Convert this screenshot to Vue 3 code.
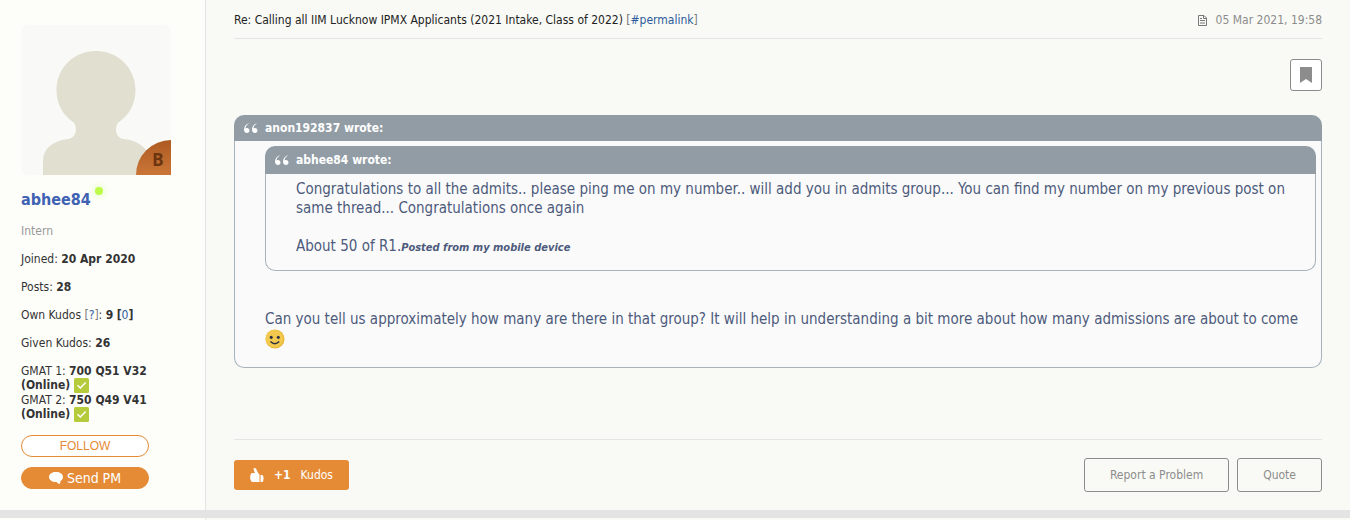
<script setup>
const facts = [
  { label: 'Joined:', value: '20 Apr 2020' },
  { label: 'Posts:', value: '28' },
  { label: 'Own Kudos', help: true, value: '9', given: '0' },
  { label: 'Given Kudos:', value: '26' },
]
const scores = [
  { label: 'GMAT 1:', value: '700 Q51 V32' },
  { label: 'GMAT 2:', value: '750 Q49 V41' },
]
</script>

<template>
  <div class="page">
    <article class="post">
      <aside class="profile">
        <div class="avatar">
          <svg class="person" viewBox="0 0 150 150" aria-hidden="true">
            <path fill="#e1dfd0" d="M75 26C97 26 114.500 43 114.500 65C114.500 80 107 91 98 97C93 101 94 113 103 114C119 116 128 124 128 136V150H22V136C22 124 31 116 47 114C56 113 57 101 52 97C43 91 35.500 80 35.500 65C35.500 43 53 26 75 26Z" />
          </svg>
          <span class="rank">B</span>
        </div>
        <div class="name"><a href="#profile">abhee84</a><span class="online"></span></div>
        <div class="role">Intern</div>
        <div v-for="f in facts" :key="f.label" class="fact">
          {{ f.label }}
          <template v-if="f.help"><span class="bracket">[</span><a href="#kudos">?</a><span class="bracket">]</span>: </template>
          <b>{{ f.value }}</b>
          <template v-if="f.given">{{ ' ' }}<b>[</b><a href="#given">{{ f.given }}</a><b>]</b></template>
        </div>
        <div class="scores">
          <div v-for="s in scores" :key="s.label" class="score">
            {{ s.label }} <b>{{ s.value }}<br />(Online)</b>{{ ' ' }}
            <svg class="check" viewBox="0 0 15 15" aria-hidden="true">
              <rect width="15" height="15" rx="1.500" fill="#b5cb3c" />
              <path d="M3.500 7.300L6.300 10L11.700 4.500" fill="none" stroke="#fff" stroke-width="1.500" />
            </svg>
          </div>
        </div>
        <button class="follow" type="button">FOLLOW</button>
        <button class="message" type="button">
          <svg width="14" height="12" viewBox="0 0 14 12" aria-hidden="true">
            <path fill="#fff" d="M7 0C11 0 14 2 14 5C14 6.800 13 8 11.500 9C11.500 10.200 11.200 11.200 10.700 12C9.400 11.600 8.300 11 7.600 10C3 10.200 0 8 0 5C0 2 3 0 7 0Z" />
          </svg>
          Send PM
        </button>
      </aside>

      <main class="content">
        <header class="head">
          <div>Re: Calling all IIM Lucknow IPMX Applicants (2021 Intake, Class of 2022) <span class="bracket">[</span><a href="#permalink">#permalink</a><span class="bracket">]</span></div>
          <div class="date">
            <svg width="9" height="11" viewBox="0 0 9 11" fill="none" stroke="#777" aria-hidden="true">
              <path d="M.5 .5H6L8.500 3V10.500H.5ZM5.500 .5V3.500H8.500M2 5.500H7M2 8H7M2 3.500H4" />
            </svg>
            <time>05 Mar 2021, 19:58</time>
          </div>
        </header>

        <div class="tools">
          <button class="bookmark" type="button" aria-label="Bookmark">
            <svg width="12" height="16" viewBox="0 0 12 16" aria-hidden="true"><path fill="#8c8c8c" d="M0 0H12V16L6 12L0 16Z" /></svg>
          </button>
        </div>

        <section class="quote">
          <div class="author">
            <svg class="marks" viewBox="0 0 14 10" aria-hidden="true">
              <path fill="#fff" d="M5.500 0C3 1.500 1.600 3.400 1.500 5.600C3.300 4.400 5.500 5.600 5.500 7.500C5.500 9 4.500 10 3 10C1.200 10 0 8.700 0 6.500C0 3.600 2 1 5.500 0ZM13.500 0C11 1.500 9.600 3.400 9.500 5.600C11.300 4.400 13.500 5.600 13.500 7.500C13.500 9 12.500 10 11 10C9.200 10 8 8.700 8 6.500C8 3.600 10 1 13.500 0Z" />
            </svg>
            anon192837 wrote:
          </div>
          <div class="body">
            <section class="quote inner">
              <div class="author">
                <svg class="marks" viewBox="0 0 14 10" aria-hidden="true">
                  <path fill="#fff" d="M5.500 0C3 1.500 1.600 3.400 1.500 5.600C3.300 4.400 5.500 5.600 5.500 7.500C5.500 9 4.500 10 3 10C1.200 10 0 8.700 0 6.500C0 3.600 2 1 5.500 0ZM13.500 0C11 1.500 9.600 3.400 9.500 5.600C11.300 4.400 13.500 5.600 13.500 7.500C13.500 9 12.500 10 11 10C9.200 10 8 8.700 8 6.500C8 3.600 10 1 13.500 0Z" />
                </svg>
                abhee84 wrote:
              </div>
              <div class="body">
                <p>Congratulations to all the admits.. please ping me on my number.. will add you in admits group... You can find my number on my previous post on same thread... Congratulations once again</p>
                <p>About 50 of R1.<em>Posted from my mobile device</em></p>
              </div>
            </section>
            <p>
              Can you tell us approximately how many are there in that group? It will help in understanding a bit more about how many admissions are about to come
              <svg class="smile" viewBox="0 0 20 20" role="img" aria-label="smile">
                <circle cx="10" cy="10" r="9.500" fill="#e6b62f" />
                <circle cx="9.400" cy="9.700" r="8.900" fill="#f2c84f" />
                <ellipse cx="6.200" cy="8.300" rx="1.500" ry="1.600" fill="#2c3140" />
                <ellipse cx="13.300" cy="8.300" rx="1.500" ry="1.600" fill="#2c3140" />
                <path d="M5.500 12.500Q9.800 17 14.200 12.500" fill="none" stroke="#2c3140" stroke-width="1.500" />
              </svg>
            </p>
          </div>
        </section>

        <footer class="actions">
          <button class="kudos" type="button">
            <svg width="14" height="15" viewBox="0 0 14 15" aria-hidden="true">
              <path fill="#fff" d="M4.500 0C6 0 6.500 1 6.800 2.500L8.500 5.500C9.300 6 9.500 6.500 9.500 7V14H3C1.500 14 .8 13 .8 12C0 11.500 0 10.300 .4 9.700C-.1 9 0 7.800 .7 7.300C.4 6 1.200 5 2.500 5H5C4.500 3.500 3.500 2 3.500 1C3.500 .4 4 0 4.500 0ZM10.500 7H12C13 7 13.500 8 13.500 10.500C13.500 13 13 14 12 14H10.500Z" />
            </svg>
            <b>+1</b>
            <span>Kudos</span>
          </button>
          <div class="right">
            <button class="outline" type="button">Report a Problem</button>
            <button class="outline" type="button">Quote</button>
          </div>
        </footer>
      </main>
    </article>
    <div class="next"></div>
  </div>
</template>

<style>
body {
  margin: 0;
  background: #fff;
}
</style>

<style scoped>
* {
  box-sizing: border-box;
}
.page {
  margin-right: 7px;
  background: #f9faf5;
  color: #333;
  font: 12px/14px Tahoma, "DejaVu Sans Condensed", "DejaVu Sans", sans-serif;
}
a {
  color: #2a5a9b;
  text-decoration: none;
}
button {
  margin: 0;
  padding: 0;
  font: inherit;
}
svg {
  flex: none;
}
.post {
  display: flex;
  border-bottom: 8px solid #e4e4e4;
}
.profile {
  flex: none;
  width: 206px;
  padding: 25px 20px 21px 21px;
  background: #fdfefa;
  border-right: 1px solid #e4e4e4;
}
.avatar {
  position: relative;
  width: 150px;
  height: 150px;
  background: #f9faf8;
  border-radius: 8px 8px 0 8px;
}
.person {
  display: block;
}
.rank {
  position: absolute;
  right: 0;
  bottom: 0;
  width: 35px;
  height: 35px;
  padding-left: 9px;
  border-radius: 35px 0 0 0;
  background: linear-gradient(#ad5a22, #cb7638);
  color: #6b3510;
  font: bold 17px/40px "Noto Sans", sans-serif;
  text-align: center;
}
.name {
  display: flex;
  gap: 4px;
  margin-top: 14px;
  font-size: 16px;
  font-weight: bold;
  line-height: 22px;
}
.name a {
  color: #3f62b3;
}
.online {
  width: 8px;
  height: 8px;
  margin-top: -2px;
  border-radius: 50%;
  background: #bdfb4b;
  box-shadow: 0 0 8px #d6fb98;
}
.role {
  margin-top: 13px;
  color: #999;
}
.fact {
  margin-top: 14px;
}
.bracket {
  color: #777;
}
.scores {
  margin-top: 14px;
}
.score {
  height: 29px;
}
.check {
  width: 15px;
  height: 15px;
  vertical-align: -4px;
}
.follow,
.message {
  display: flex;
  align-items: center;
  justify-content: center;
  gap: 4px;
  width: 128px;
  height: 22px;
  border: 1px solid #e58b36;
  border-radius: 11px;
}
.follow {
  margin-top: 13px;
  background: #fff;
  color: #e58b36;
  font: 12px/20px "Liberation Sans", Arial, sans-serif;
}
.message {
  margin-top: 10px;
  background: #e58b36;
  color: #fff;
  font-size: 14px;
}
.content {
  flex: 1;
  min-width: 0;
  padding: 0 28px;
}
.head {
  display: flex;
  justify-content: space-between;
  padding: 13px 0 11px;
  border-bottom: 1px solid #e4e4e4;
  color: #222;
}
.date {
  display: flex;
  align-items: center;
  gap: 9px;
  color: #8c8c8c;
}
.tools {
  display: flex;
  justify-content: flex-end;
  padding: 20px 0 24px;
}
.bookmark {
  display: grid;
  place-items: center;
  width: 32px;
  height: 32px;
  border: 1px solid #8c8c8c;
  border-radius: 3px;
  background: #fff;
}
.author {
  display: flex;
  align-items: center;
  gap: 7px;
  padding: 0 10px;
  border-radius: 10px 10px 0 0;
  background: #929ca5;
  color: #fff;
  font-size: 12px;
  font-weight: bold;
  line-height: 26px;
}
.marks {
  width: 14px;
  height: 10px;
}
.body {
  padding: 5px 5px 18px 30px;
  border: 1px solid #a6b3bd;
  border-top: 0;
  border-radius: 0 0 10px 10px;
  background: #fafafa;
  color: #4d5a7c;
  font: 15px/19px "Lucida Grande", "DejaVu Sans Condensed", "DejaVu Sans", sans-serif;
}
.inner .author {
  line-height: 28px;
}
.inner .body {
  padding-top: 6px;
  padding-bottom: 13px;
}
.inner + p {
  margin-top: 39px;
}
p {
  margin: 0;
}
p + p {
  margin-top: 19px;
}
em {
  font-size: 11px;
  font-weight: bold;
}
.smile {
  width: 20px;
  height: 20px;
  vertical-align: -5px;
}
.actions {
  display: flex;
  align-items: center;
  justify-content: space-between;
  margin-top: 71px;
  padding: 18px 0;
  border-top: 1px solid #e4e4e4;
}
.kudos {
  display: flex;
  align-items: center;
  gap: 10px;
  height: 30px;
  padding: 0 16px;
  border: 0;
  border-radius: 3px;
  background: #e58b36;
  color: #fff;
}
.right {
  display: flex;
  gap: 8px;
}
.outline {
  height: 34px;
  padding: 0 25px;
  border: 1px solid #8c8c8c;
  border-radius: 3px;
  background: transparent;
  color: #8c8c8c;
}
.next {
  width: 206px;
  height: 2px;
  background: #fdfefa;
  border-right: 1px solid #e4e4e4;
}
</style>
